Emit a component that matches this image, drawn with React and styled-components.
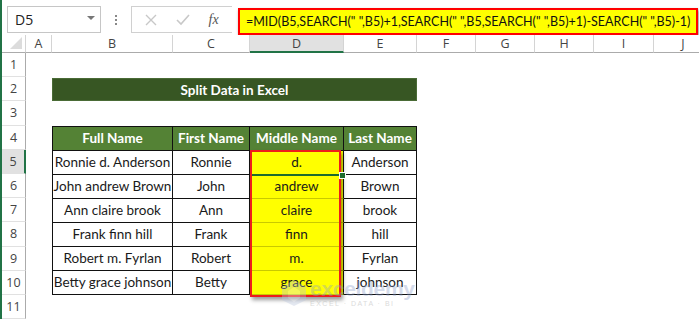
import React from 'react';
import styled, { createGlobalStyle } from 'styled-components';

const GlobalStyle = createGlobalStyle`
  html, body {
    margin: 0;
    padding: 0;
    background: #fff;
  }
  body {
    font-family: "Lato", "Liberation Sans", sans-serif;
  }
`;

const cellFont = `"Lato", "Liberation Sans", sans-serif`;
const uiFont = `"Open Sans", "Noto Sans", sans-serif`;

// Widths of the row header and columns A..J
const colWidths = [24, 26, 121, 77, 94, 73, 59, 59, 59, 60, 59];
const letters = ['A', 'B', 'C', 'D', 'E', 'F', 'G', 'H', 'I', 'J'];
const ROW_H = 24.2;

const rows = [
  ['Ronnie d. Anderson', 'Ronnie', 'd.', 'Anderson'],
  ['John andrew Brown', 'John', 'andrew', 'Brown'],
  ['Ann claire brook', 'Ann', 'claire', 'brook'],
  ['Frank finn hill', 'Frank', 'finn', 'hill'],
  ['Robert m. Fyrlan', 'Robert', 'm.', 'Fyrlan'],
  ['Betty grace johnson', 'Betty', 'grace', 'johnson'],
];

const Frame = styled.div`
  width: 699px;
  height: 319px;
  overflow: hidden;
  border-left: 2px solid #217346;
  box-sizing: border-box;
  display: flex;
  flex-direction: column;
`;

/* ---------- formula bar ---------- */

const FormulaBar = styled.div`
  height: 42px;
  display: flex;
  align-items: flex-start;
  padding: 6px 0 0 5px;
  box-sizing: border-box;
`;

const NameBox = styled.div`
  width: 94px;
  height: 27px;
  border: 1px solid #c6c6c6;
  box-sizing: border-box;
  display: flex;
  align-items: center;
  justify-content: space-between;
  padding: 0 5px 0 7px;
  font-family: ${uiFont};
  font-size: 14px;
  color: #222;
`;

const DropArrow = styled.span`
  width: 0;
  height: 0;
  border-left: 4px solid transparent;
  border-right: 4px solid transparent;
  border-top: 4px solid #777;
  margin-top: -3px;
`;

const Dots = styled.div`
  width: 30px;
  height: 27px;
  display: flex;
  flex-direction: column;
  align-items: center;
  justify-content: center;
  gap: 2px;

  span {
    width: 2px;
    height: 2px;
    background: #888;
  }
`;

const FxGroup = styled.div`
  width: 101px;
  height: 27px;
  border: 1px solid #d0d0d0;
  border-right: none;
  box-sizing: border-box;
  display: flex;
  align-items: center;
  justify-content: space-around;
  padding: 0 4px;
`;

const FxLabel = styled.span`
  font-family: "Liberation Serif", serif;
  font-style: italic;
  font-size: 14px;
  color: #555;
`;

const FormulaInput = styled.div`
  margin: 2px 0 0 6px;
  width: 460px;
  height: 27px;
  box-sizing: border-box;
  background: #ffff00;
  border: 2px solid #ff0000;
  box-shadow: 1px 2px 3px rgba(0, 0, 0, 0.45);
  display: flex;
  align-items: center;
  padding-left: 6px;
  font-family: ${cellFont};
  font-size: 12.5px;
  color: #111;
  white-space: pre;
  overflow: hidden;
`;

/* ---------- sheet ---------- */

const Sheet = styled.div`
  position: relative;
  display: grid;
  grid-template-columns: ${colWidths.map((w) => `${w}px`).join(' ')};
  grid-template-rows: 18px repeat(11, ${ROW_H}px);
`;

const Corner = styled.div`
  border-right: 1px solid #d4d4d4;
  border-bottom: 1px solid #ababab;
  box-sizing: border-box;
  position: relative;

  &::after {
    content: '';
    position: absolute;
    right: 3px;
    bottom: 3px;
    border-left: 12px solid transparent;
    border-bottom: 12px solid #dcdcdc;
  }
`;

const ColHead = styled.div`
  display: flex;
  align-items: center;
  justify-content: center;
  box-sizing: border-box;
  font-family: ${uiFont};
  font-size: 12.5px;
  color: #444;
  background: ${(p) => (p.$active ? '#e1e1e1' : '#fff')};
  border-right: 1px solid #d4d4d4;
  border-bottom: ${(p) => (p.$active ? '2px solid #217346' : '1px solid #ababab')};
`;

const RowHead = styled.div`
  display: flex;
  align-items: center;
  justify-content: center;
  box-sizing: border-box;
  font-family: ${uiFont};
  font-size: 12.5px;
  color: #444;
  background: ${(p) => (p.$active ? '#e1e1e1' : '#fff')};
  border-bottom: 1px solid #e1e1e1;
  border-right: ${(p) => (p.$active ? '2px solid #217346' : '1px solid #ababab')};
  grid-column: 1;
`;

const TitleBar = styled.div`
  grid-column: 3 / 7;
  grid-row: 3;
  margin-top: 1px;
  background: #375623;
  border: 1px solid #4a6b36;
  box-sizing: border-box;
  display: flex;
  align-items: center;
  justify-content: center;
  color: #fff;
  font-family: ${cellFont};
  font-weight: 700;
  font-size: 13.5px;
`;

const Table = styled.div`
  grid-column: 3 / 7;
  grid-row: 5 / 12;
  position: relative;
  display: grid;
  grid-template-columns: 120px 77px 94px 73px;
  grid-template-rows: repeat(7, 1fr);
  border-top: 1px solid #111;
  border-left: 1px solid #111;
  box-sizing: border-box;
`;

const Cell = styled.div`
  display: flex;
  align-items: center;
  justify-content: center;
  box-sizing: border-box;
  border-right: 1px solid #111;
  border-bottom: 1px solid
    ${(p) => (p.$variant === 'mid' ? '#c9c900' : '#111')};
  font-family: ${cellFont};
  font-size: 13.5px;
  white-space: nowrap;
  color: ${(p) => (p.$variant === 'head' ? '#fff' : '#1a1a1a')};
  font-weight: ${(p) => (p.$variant === 'head' ? 700 : 400)};
  background: ${(p) =>
    p.$variant === 'head' ? '#548235' : p.$variant === 'mid' ? '#ffff00' : '#fff'};
`;

// red outline drawn over the Middle Name results, with the active-cell marks
const Highlight = styled.div`
  position: absolute;
  left: 197px;
  top: 23px;
  width: 91px;
  height: 147px;
  box-sizing: border-box;
  border: 2px solid #ee1c1c;
  box-shadow: 2px 3px 4px rgba(0, 0, 0, 0.4);
  pointer-events: none;

  &::before {
    content: '';
    position: absolute;
    left: 0;
    right: -3px;
    top: 22px;
    height: 2px;
    background: #1e6b2e;
  }

  &::after {
    content: '';
    position: absolute;
    right: -7px;
    top: 20px;
    width: 5px;
    height: 5px;
    background: #1e6b2e;
    border: 1px solid #fff;
  }
`;

const Watermark = styled.div`
  position: absolute;
  left: 279px;
  top: 243px;
  display: flex;
  align-items: center;
  gap: 3px;
  opacity: 0.36;
  pointer-events: none;
`;

const MarkText = styled.div`
  display: flex;
  flex-direction: column;
  line-height: 1;
  font-family: "Liberation Sans", sans-serif;
  color: #8a9cc9;

  b {
    font-size: 21px;
    font-weight: 700;
    letter-spacing: -0.3px;
  }

  small {
    font-size: 7px;
    letter-spacing: 1.5px;
    color: #9a9a9a;
    margin-top: 1px;
  }
`;

const CrossIcon = () => (
  <svg width="12" height="12" viewBox="0 0 12 12">
    <path d="M1 1 L11 11 M11 1 L1 11" stroke="#c8c8c8" strokeWidth="1.4" />
  </svg>
);

const CheckIcon = () => (
  <svg width="14" height="12" viewBox="0 0 14 12">
    <path d="M1 6 L5 10 L13 1" stroke="#c8c8c8" strokeWidth="1.6" fill="none" />
  </svg>
);

const HexLogo = () => (
  <svg width="26" height="28" viewBox="0 0 26 28">
    <path d="M13 1 L25 8 L25 21 L13 27 L1 21 L1 8 Z" fill="#b8c4dc" />
    <path d="M7 12 L13 8 L19 12 L19 19 L13 23 L7 19 Z" fill="#fff" opacity="0.6" />
  </svg>
);

const formula = '=MID(B5,SEARCH(" ",B5)+1,SEARCH(" ",B5,SEARCH(" ",B5)+1)-SEARCH(" ",B5)-1)';

export default function App() {
  return (
    <>
      <GlobalStyle />
      <Frame>
        <FormulaBar>
          <NameBox>
            D5
            <DropArrow />
          </NameBox>
          <Dots>
            <span />
            <span />
            <span />
          </Dots>
          <FxGroup>
            <CrossIcon />
            <CheckIcon />
            <FxLabel>fx</FxLabel>
          </FxGroup>
          <FormulaInput>{formula}</FormulaInput>
        </FormulaBar>

        <Sheet>
          <Corner />
          {letters.map((l) => (
            <ColHead key={l} $active={l === 'D'}>
              {l}
            </ColHead>
          ))}
          {Array.from({ length: 11 }, (_, i) => (
            <RowHead key={i} $active={i === 4} style={{ gridRow: i + 2 }}>
              {i + 1}
            </RowHead>
          ))}

          <TitleBar>Split Data in Excel</TitleBar>

          <Table>
            {['Full Name', 'First Name', 'Middle Name', 'Last Name'].map((h) => (
              <Cell key={h} $variant="head">
                {h}
              </Cell>
            ))}
            {rows.map((r) =>
              r.map((v, j) => (
                <Cell key={r[0] + j} $variant={j === 2 ? 'mid' : undefined}>
                  {v}
                </Cell>
              ))
            )}
            <Highlight />
          </Table>

          <Watermark>
            <HexLogo />
            <MarkText>
              <b>exceldemy</b>
              <small>EXCEL · DATA · BI</small>
            </MarkText>
          </Watermark>
        </Sheet>
      </Frame>
    </>
  );
}
